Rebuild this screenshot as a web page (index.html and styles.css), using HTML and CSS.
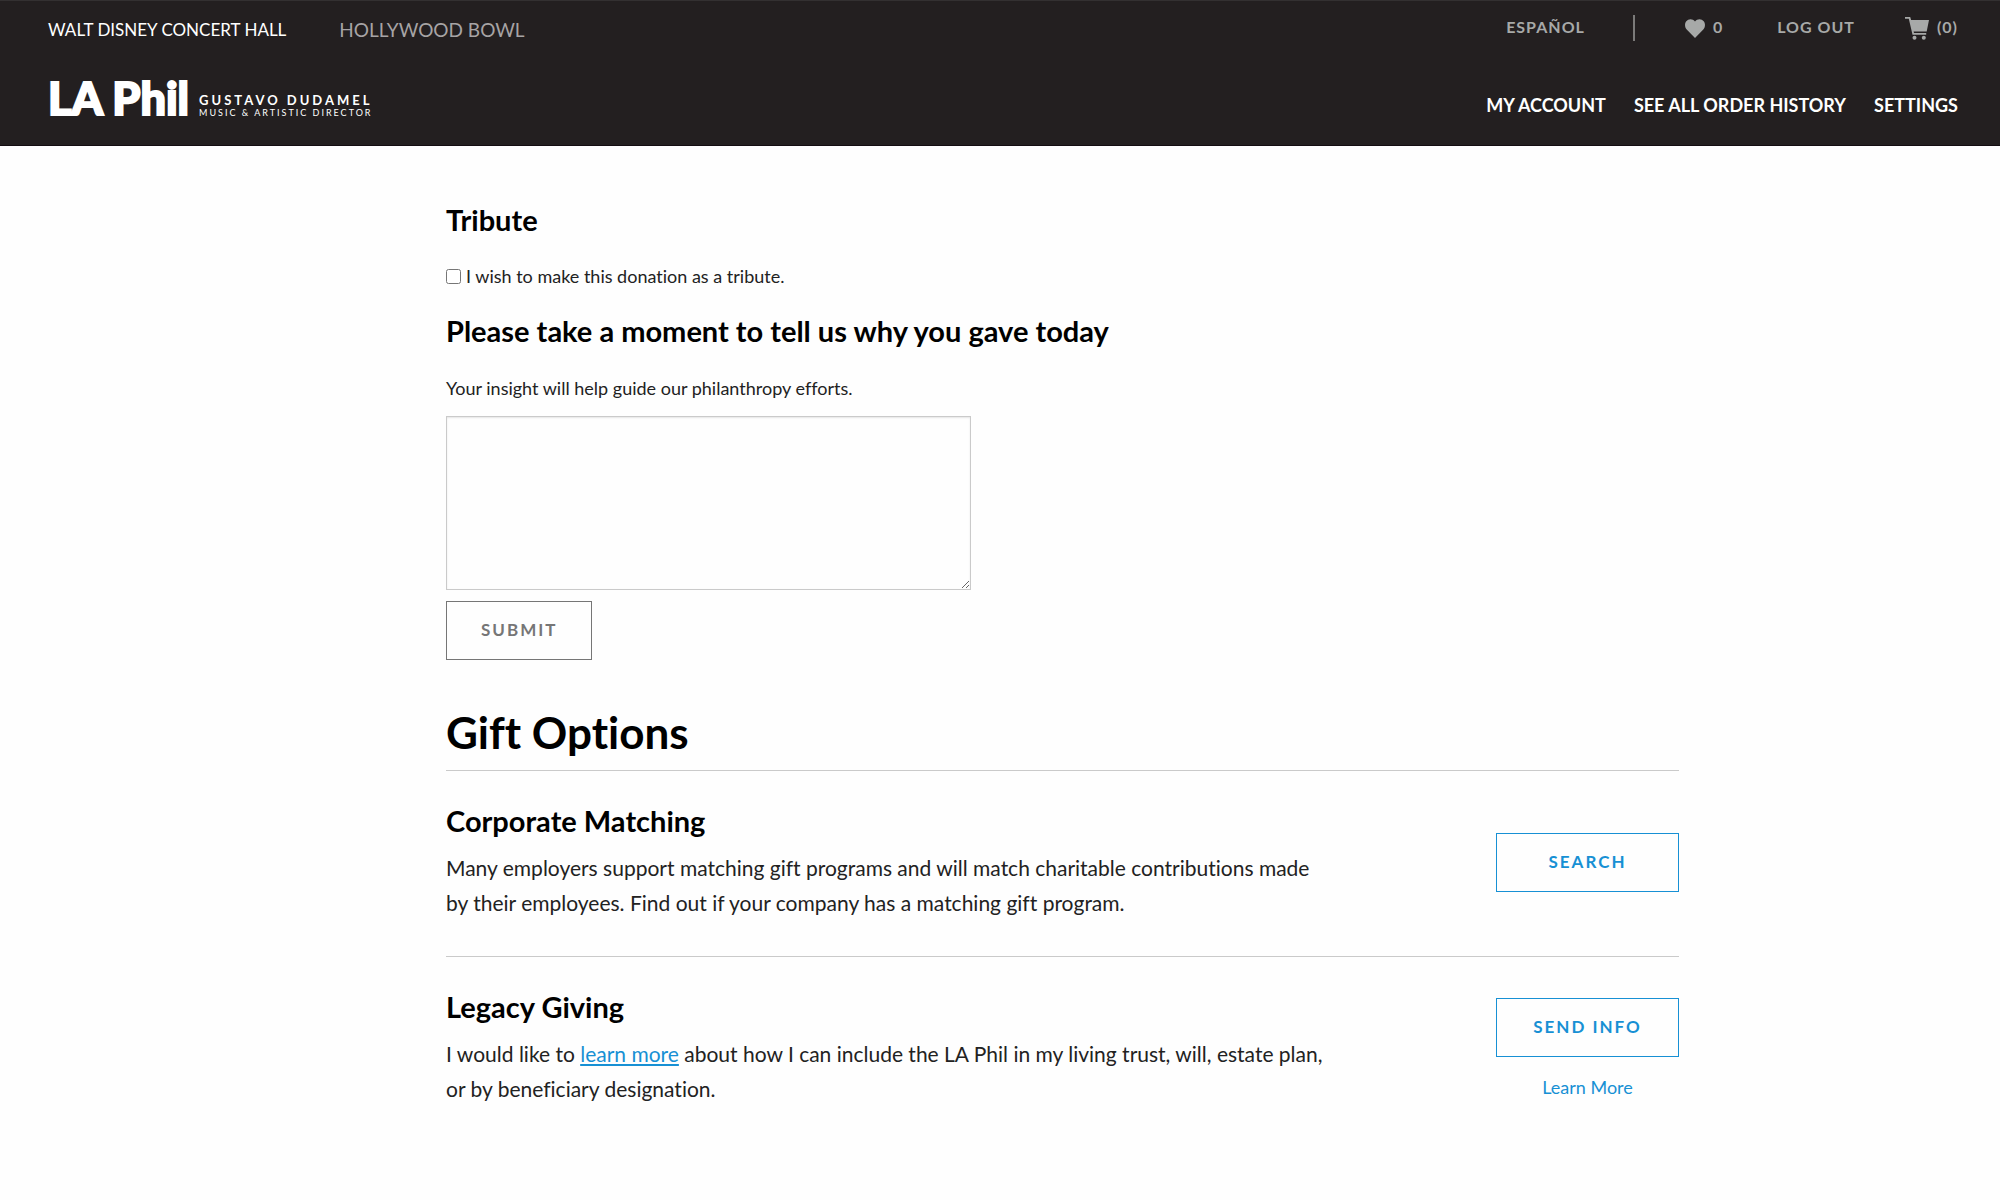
FILE: index.html
```html
<!DOCTYPE html>
<html lang="en">
<head>
<meta charset="utf-8">
<title>Donation – LA Phil</title>
<link rel="stylesheet" href="styles.css">
</head>
<body>
<header class="site-header">
  <div class="top-bar">
    <nav class="venues" aria-label="Venues">
      <a class="venue venue-current" href="#">WALT DISNEY CONCERT HALL</a>
      <a class="venue venue-bowl" href="#">HOLLYWOOD BOWL</a>
    </nav>
    <nav class="utility" aria-label="Utility">
      <a class="utility-link language" href="#">ESPAÑOL</a>
      <a class="utility-link favorites" href="#" aria-label="Favorites">
        <svg class="heart" viewBox="0 0 20 19" aria-hidden="true"><path d="M10 19 1.700 10.600C-.4 8.300-.5 4.500 1.300 2.200 3.500-.5 7.700-.6 10 2.500c2.300-3.100 6.500-3 8.700-.3 1.800 2.300 1.700 6.100-.4 8.400z"/></svg>
        <span>0</span>
      </a>
      <a class="utility-link logout" href="#">LOG OUT</a>
      <a class="utility-link cart-link" href="#" aria-label="Cart">
        <svg class="cart" viewBox="0 0 24 23" aria-hidden="true"><path d="M0 0h5.200l.9 3H24l-2.300 11.500H8.600l.4 1.500h12.200v1.800H7.500L3.800 1.800H0z"/><circle cx="9.500" cy="20.700" r="2"/><circle cx="18.800" cy="20.700" r="2"/></svg>
        <span>(0)</span>
      </a>
    </nav>
  </div>
  <div class="main-bar">
    <a class="brand" href="#">
      <span class="brand-name">LA Phil</span>
      <span class="brand-director">
        <span class="director-name">GUSTAVO DUDAMEL</span>
        <span class="director-title">MUSIC &amp; ARTISTIC DIRECTOR</span>
      </span>
    </a>
    <nav class="account" aria-label="Account">
      <a class="account-link" href="#">MY ACCOUNT</a>
      <a class="account-link" href="#">SEE ALL ORDER HISTORY</a>
      <a class="account-link" href="#">SETTINGS</a>
    </nav>
  </div>
</header>
<main class="content">
  <form class="survey">
    <h2 class="heading">Tribute</h2>
    <label class="tribute"><input class="tribute-box" type="checkbox"><span>I wish to make this donation as a tribute.</span></label>
    <h2 class="heading">Please take a moment to tell us why you gave today</h2>
    <label class="hint" for="reason">Your insight will help guide our philanthropy efforts.</label>
    <textarea class="reason" id="reason"></textarea>
    <button class="button button-submit" type="button">SUBMIT</button>
  </form>
  <section class="gifts">
    <h1 class="title">Gift Options</h1>
    <article class="gift">
      <div class="gift-text">
        <h2 class="heading">Corporate Matching</h2>
        <p class="copy">Many employers support matching gift programs and will match charitable contributions made by their employees. Find out if your company has a matching gift program.</p>
      </div>
      <div class="gift-actions">
        <button class="button button-gift" type="button">SEARCH</button>
      </div>
    </article>
    <article class="gift">
      <div class="gift-text">
        <h2 class="heading">Legacy Giving</h2>
        <p class="copy">I would like to <a class="inline-link" href="#">learn more</a> about how I can include the LA Phil in my living trust, will, estate plan, or by beneficiary designation.</p>
      </div>
      <div class="gift-actions">
        <button class="button button-gift" type="button">SEND INFO</button>
        <a class="more" href="#">Learn More</a>
      </div>
    </article>
  </section>
</main>
</body>
</html>
```
FILE: styles.css
```css
* { box-sizing: border-box; }

body {
  margin: 0;
  background: #fefefe;
  color: #222;
  font-family: Lato, "Open Sans", sans-serif;
  font-size: 18px;
  line-height: 24px;
  font-variant-ligatures: no-common-ligatures;
}

a { text-decoration: none; }
h1, h2, p { margin: 0; }

/* Header */
.site-header {
  padding: 0 42px 0 48px;
  background: #231f20;
  border-top: 1px solid #333031;
  border-bottom: 1px solid #140d12;
}

.top-bar, .main-bar {
  display: flex;
  justify-content: space-between;
}

.top-bar { height: 64px; }
.main-bar { height: 80px; align-items: flex-start; }

.venues { display: flex; gap: 53px; padding-top: 17px; }
.venue { color: #fff; font-size: 17px; }
.venue-bowl { color: #a7a4a5; font-size: 19px; }

.utility { display: flex; align-items: flex-start; padding-top: 14px; }
.utility-link {
  display: flex;
  align-items: center;
  height: 26px;
  color: #a7a9a8;
  fill: #a7a9a8;
  font-size: 16px;
  font-weight: 700;
  line-height: 24px;
  letter-spacing: 1px;
}
.utility-link span { padding-bottom: 2px; }
.language { padding-right: 48px; padding-bottom: 2px; border-right: 2px solid #7b7a79; }
.favorites { gap: 8px; padding-left: 50px; }
.logout { padding-left: 54px; padding-bottom: 2px; }
.cart-link { gap: 8px; padding-left: 50px; }
.heart { width: 20px; height: 19px; }
.cart { width: 24px; height: 23px; }

.brand { display: flex; align-items: flex-end; gap: 10px; padding-top: 3px; color: #fff; }
.brand-name {
  font-size: 45px;
  font-weight: 900;
  line-height: 60px;
  -webkit-text-stroke: 2px #fff;
}
.brand-director { display: flex; flex-direction: column; padding-bottom: 10px; }
.director-name { font-size: 13px; font-weight: 700; line-height: 16px; letter-spacing: 3px; }
.director-title { font-size: 9px; line-height: 10px; letter-spacing: 2px; }

.account { display: flex; gap: 28px; padding-top: 28px; }
.account-link { color: #fff; font-weight: 700; }

/* Content */
.content { margin: 0 16.05% 0 22.3%; padding: 54px 0 80px; }

.heading { color: #000; font-size: 29px; font-weight: 700; line-height: 40px; }

.survey { display: flex; flex-direction: column; align-items: flex-start; }
.tribute { display: flex; align-items: center; gap: 5px; margin: 24px 0 23px; }
.tribute-box { width: 15px; height: 15px; margin: 0; }
.hint { margin: 25px 0 16px; }
.reason {
  width: 525px;
  max-width: 100%;
  height: 174px;
  padding: 8px;
  border: 1px solid #cacaca;
  background: #fefefe;
  box-shadow: inset 0 1px 2px rgba(10, 10, 10, 0.1);
  font: inherit;
}

.button {
  height: 59px;
  padding: 0 34px 2px;
  border: 1px solid currentColor;
  background: #fefefe;
  font-family: inherit;
  font-size: 17px;
  font-weight: 700;
  line-height: 24px;
  letter-spacing: 2px;
}
.button-submit { margin-top: 11px; color: #767676; }

.title {
  margin-top: 42px;
  padding-bottom: 8px;
  color: #000;
  font-size: 44px;
  font-weight: 700;
  line-height: 60px;
}

.gift {
  display: flex;
  justify-content: space-between;
  gap: 48px;
  padding: 30px 0 36px;
  border-top: 1px solid #cacaca;
}
.gift-text { max-width: 880px; }
.copy { font-size: 21px; line-height: 35px; margin-top: 9px; }
.inline-link { color: #1790d4; text-decoration: underline; }
.gift-actions {
  display: flex;
  flex-direction: column;
  align-items: center;
  justify-content: center;
  gap: 18px;
  padding-top: 4px;
}
.button-gift { width: 183px; color: #1790d4; }
.more { color: #1790d4; }
```
